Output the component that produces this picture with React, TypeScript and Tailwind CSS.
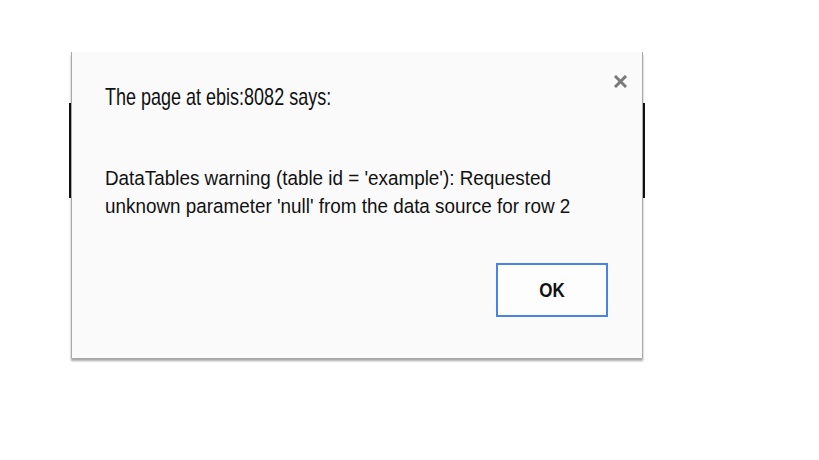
const CloseIcon = () => (
  <svg width="13" height="13" viewBox="0 0 13 13" className="text-[#7a7a7a]">
    <path d="M2 2 L11 11 M11 2 L2 11" stroke="currentColor" strokeWidth="3" strokeLinecap="square" />
  </svg>
);

const App = () => {
  return (
    <div className="relative h-[460px] w-[819px] overflow-hidden bg-white [font-family:'Liberation_Sans',Arial,sans-serif]">
      {/* page content behind the dialog */}
      <div className="pt-[103px] pl-[69px]">
        <div className="h-[95px] w-[576px] bg-[#111]" />
      </div>

      <div className="absolute left-[71px] top-[52px] flex h-[306px] w-[572px] flex-col border-x border-[#a9a9a9] bg-[#fafafa] shadow-[0_3px_2px_rgba(0,0,0,0.35)]">
        <div className="flex items-start justify-between pl-[33px] pr-[15px] pt-[30px]">
          <h1 className="origin-left scale-x-[0.75] whitespace-nowrap text-[24px] leading-[30px] text-[#111]">
            The page at ebis:8082 says:
          </h1>
          <button className="mt-[-8px] flex h-[14px] w-[14px] items-center justify-center">
            <CloseIcon />
          </button>
        </div>
        <div className="mt-[52px] pl-[33px]">
          <p className="origin-left scale-x-[0.92] whitespace-nowrap text-[20.5px] leading-[28px] text-[#111]">
            DataTables warning (table id = 'example'): Requested
            <br />
            unknown parameter 'null' from the data source for row 2
          </p>
        </div>
        <div className="mt-auto flex justify-end pb-[41px] pr-[34px]">
          <button className="flex h-[54px] w-[112px] items-center justify-center border-2 border-[#4a83e6] bg-[#fdfdfd] text-[#111]">
            <span className="scale-x-[0.85] text-[20px] font-bold">OK</span>
          </button>
        </div>
      </div>
    </div>
  );
};

export default App;
